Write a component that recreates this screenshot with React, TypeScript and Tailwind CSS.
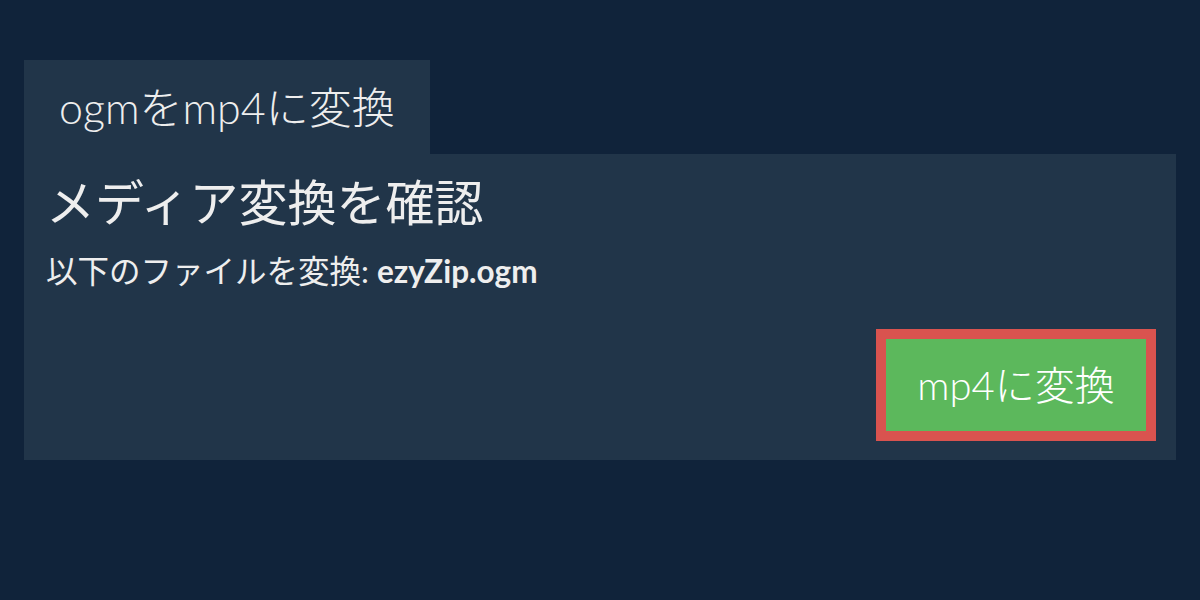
import React from 'react';

export default function App() {
  const font = { fontFamily: "Lato, 'Noto Sans CJK JP', 'Noto Sans', sans-serif" };

  return (
    <div className="w-[1200px] h-[600px] bg-[#10233a] pt-[60px] px-[24px]" style={font}>
      <div className="inline-flex items-center h-[94px] pl-[35px] pr-[35px] bg-[#213549]">
        <h2 className="text-[43px] font-light leading-none text-[#eeeeee]">ogmをmp4に変換</h2>
      </div>
      <div className="h-[306px] bg-[#213549] pt-[20px] pl-[22px] pr-[20px] flex flex-col">
        <h1 className="text-[49px] leading-[56px] text-[#eeeeee]">メディア変換を確認</h1>
        <p className="mt-[23px] text-[31.5px] leading-[36px] text-[#eeeeee]">
          以下のファイルを変換: <b className="font-bold">ezyZip.ogm</b>
        </p>
        <div className="flex justify-end mt-[40px]">
          <button className="w-[280px] h-[112px] border-[10px] border-[#d9534f] bg-[#5cb85c] text-[40px] font-light text-white">
            mp4に変換
          </button>
        </div>
      </div>
    </div>
  );
}
